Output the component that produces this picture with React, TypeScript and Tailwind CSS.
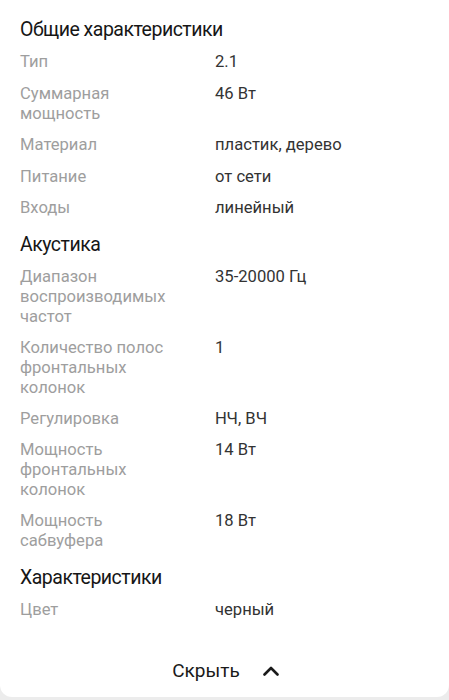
import React from "react";

type Row = { label: string; value: string };
type Section = { title: string; rows: Row[] };

const sections: Section[] = [
  {
    title: "Общие характеристики",
    rows: [
      { label: "Тип", value: "2.1" },
      { label: "Суммарная мощность", value: "46 Вт" },
      { label: "Материал", value: "пластик, дерево" },
      { label: "Питание", value: "от сети" },
      { label: "Входы", value: "линейный" },
    ],
  },
  {
    title: "Акустика",
    rows: [
      { label: "Диапазон воспроизводимых частот", value: "35-20000 Гц" },
      { label: "Количество полос фронтальных колонок", value: "1" },
      { label: "Регулировка", value: "НЧ, ВЧ" },
      { label: "Мощность фронтальных колонок", value: "14 Вт" },
      { label: "Мощность сабвуфера", value: "18 Вт" },
    ],
  },
  {
    title: "Характеристики",
    rows: [{ label: "Цвет", value: "черный" }],
  },
];

const App = () => {
  return (
    <div className="w-[449px] h-[700px] bg-[#ececec] font-['Roboto',sans-serif]">
      <div className="h-[697px] bg-white rounded-b-[12px] px-5 pt-[18px] flex flex-col">
        {sections.map((s, i) => (
          <div key={i} className="mb-[15px]">
            <h2 className="text-[19.5px] leading-6 tracking-[-0.5px] text-[#161616] mb-[10px]">{s.title}</h2>
            <div className={i === 0 ? "flex flex-col gap-[11.5px]" : "flex flex-col gap-[11px]"}>
              {s.rows.map((r, j) => (
                <div key={j} className="flex text-[16.6px] leading-5">
                  <div className="w-[195px] pr-[28px] text-[#9e9e9e]">{r.label}</div>
                  <div className="flex-1 text-[#333333]">{r.value}</div>
                </div>
              ))}
            </div>
          </div>
        ))}

        <div className="mt-auto mb-[14px] flex items-center justify-center gap-[23px] pl-[2px]">
          <span className="text-[19px] leading-6 text-[#1a1a1a]">Скрыть</span>
          <svg width="16" height="10" viewBox="0 0 16 10" fill="none">
            <path d="M1.5 8.5 L8 2 L14.5 8.5" stroke="#1a1a1a" strokeWidth="2.6" strokeLinecap="round" strokeLinejoin="round" />
          </svg>
        </div>
      </div>
    </div>
  );
};

export default App;
